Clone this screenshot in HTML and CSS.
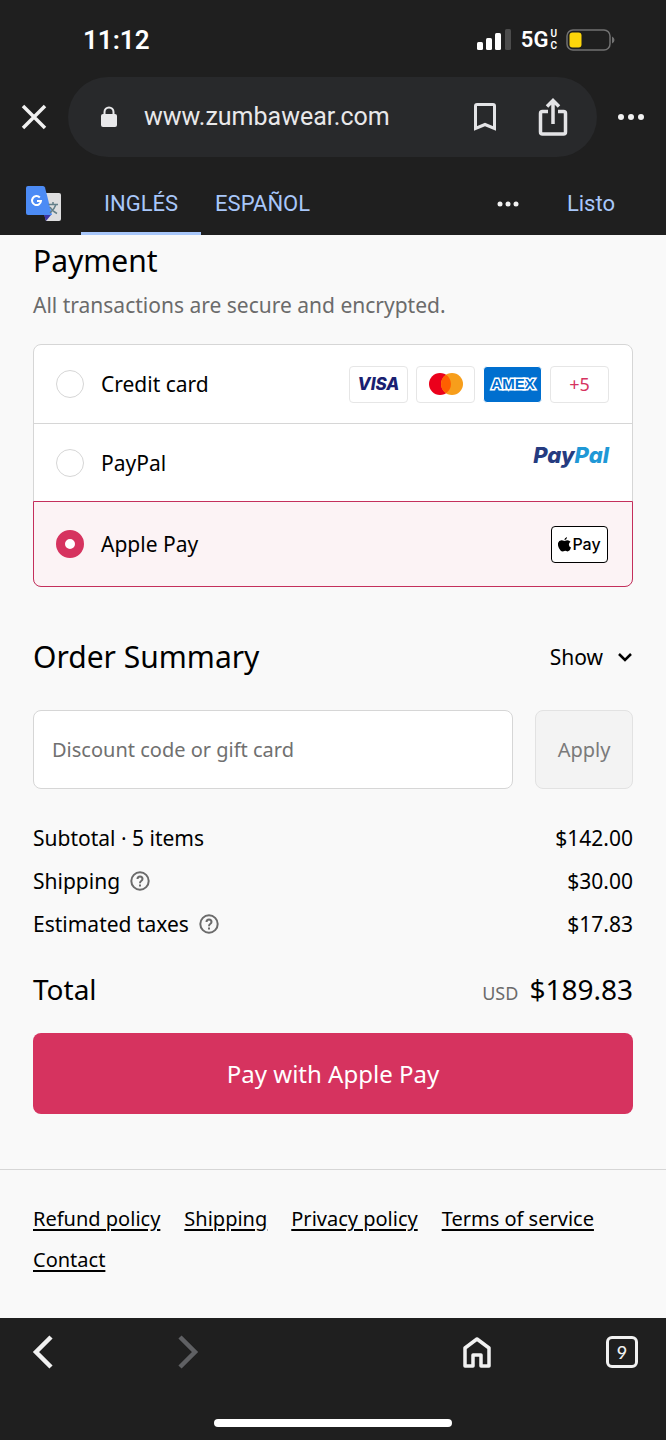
FILE: index.html
```
<!DOCTYPE html>
<html lang="en">
<head>
<meta charset="utf-8">
<meta name="viewport" content="width=device-width, initial-scale=1">
<title>Checkout</title>
<link rel="stylesheet" href="styles.css">
</head>
<body>
<header class="chrome">
  <div class="status">
    <time class="clock">11:12</time>
    <div class="signals">
      <svg width="34" height="22" viewBox="0 0 34 22" fill="#fff" aria-hidden="true"><rect y="13" width="6" height="8" rx="1.5"/><rect x="9" y="9" width="6" height="12" rx="1.5"/><rect x="18" y="4" width="6" height="17" rx="1.5"/><rect x="28" width="6" height="21" rx="1.5" fill="#4c4c4c"/></svg>
      <span class="network">5G</span>
      <span class="network-sub"><span>U</span><span>C</span></span>
      <svg width="50" height="23" viewBox="0 0 50 23" aria-hidden="true"><rect x="1" y="1" width="43" height="20" rx="6" fill="none" stroke="#727272" stroke-width="1.5"/><rect x="3.500" y="3.500" width="12" height="15" rx="3" fill="#fdd60a"/><path d="M46 7.500q2.500 1 2.500 3.500t-2.500 3.500z" fill="#727272"/></svg>
    </div>
  </div>
  <div class="toolbar">
    <button class="icon-button close" type="button" aria-label="Close"><svg width="26" height="26" viewBox="0 0 26 26" fill="none" stroke="#f1f1f1" stroke-width="3.500"><path d="M2 2l22 22M24 2L2 24"/></svg></button>
    <div class="address">
      <svg width="18" height="22" viewBox="0 0 18 22" aria-hidden="true"><rect x="1" y="8" width="16" height="13" rx="2" fill="#e8e8ea"/><path d="M4.500 9V6a4.500 4.500 0 0 1 9 0v3" fill="none" stroke="#e8e8ea" stroke-width="2"/></svg>
      <span class="url">www.zumbawear.com</span>
      <button class="icon-button" type="button" aria-label="Bookmark"><svg width="24" height="30" viewBox="0 0 24 30" fill="none" stroke="#e3e3e6" stroke-width="3"><path d="M2.500 26.500V4q0-1.500 1.500-1.500h16q1.500 0 1.500 1.500v22.500L12 22.500z"/></svg></button>
      <button class="icon-button" type="button" aria-label="Share"><svg width="30" height="38" viewBox="0 0 30 38" fill="none" stroke="#e3e3e6" stroke-width="3.500"><path d="M10 13.500H4.500q-2 0-2 2V34q0 2 2 2h21q2 0 2-2V15.500q0-2-2-2H20M15 26V3M9 8.500l6-6 6 6"/></svg></button>
    </div>
    <button class="icon-button more" type="button" aria-label="More"><svg width="28" height="8" viewBox="0 0 28 8" fill="#f1f1f1"><circle cx="4" cy="4" r="3"/><circle cx="14" cy="4" r="3"/><circle cx="24" cy="4" r="3"/></svg></button>
  </div>
  <div class="translate">
    <svg class="translate-logo" width="36" height="36" viewBox="0 0 36 36" aria-hidden="true">
      <path d="M13 7h20q2 0 2 2v24q0 2-2 2H20z" fill="#dededf"/>
      <path d="M18 29h7l-5 6z" fill="#3c35a8"/>
      <path d="M2 0h15q1.500 0 2 1.500L26 29H2q-2 0-2-2V2q0-2 2-2z" fill="#4c8bf5"/>
      <path d="M22.500 18.500H32M27 16v2.500M30 18.500q-1.500 4.500-6 8.500M24 21q2 4 7 6.500" fill="none" stroke="#637f89" stroke-width="1.500"/>
      <path d="M13.800 11.500a4.500 4.500 0 1 0 1.200 3.500h-4" fill="none" stroke="#fff" stroke-width="2"/>
    </svg>
    <button class="tab active" type="button">INGLÉS</button>
    <button class="tab" type="button">ESPAÑOL</button>
    <button class="icon-button options-more" type="button" aria-label="Options"><svg width="22" height="6" viewBox="0 0 22 6" fill="#f1f1f1"><circle cx="3" cy="3" r="2.500"/><circle cx="11" cy="3" r="2.500"/><circle cx="19" cy="3" r="2.500"/></svg></button>
    <button class="done" type="button">Listo</button>
  </div>
</header>

<main class="page">
  <form class="checkout">
    <h2 class="heading">Payment</h2>
    <p class="note">All transactions are secure and encrypted.</p>
    <div class="methods">
      <div class="method">
        <input class="radio" type="radio" name="method" id="card">
        <label for="card">Credit card</label>
        <div class="brands">
          <span class="brand visa">VISA</span>
          <span class="brand"><svg width="36" height="24" viewBox="0 0 36 24" role="img" aria-label="Mastercard"><circle cx="12" cy="12" r="11" fill="#eb001b"/><circle cx="24" cy="12" r="11" fill="#f79e1b"/><path d="M18 2.800a11 11 0 0 1 0 18.400 11 11 0 0 1 0-18.400z" fill="#ff5f00"/></svg></span>
          <span class="brand amex"><svg width="54" height="24" viewBox="0 0 54 24" role="img" aria-label="American Express"><text class="amex-text" x="27" y="17" text-anchor="middle">AMEX</text></svg></span>
          <button class="brand extra" type="button">+5</button>
        </div>
      </div>
      <div class="method">
        <input class="radio" type="radio" name="method" id="paypal">
        <label for="paypal">PayPal</label>
        <span class="paypal"><span class="paypal-dark">Pay</span>Pal</span>
      </div>
      <div class="method selected">
        <input class="radio" type="radio" name="method" id="apple" checked>
        <label for="apple">Apple Pay</label>
        <span class="apple"><svg width="13" height="15" viewBox="0 0 13 15" aria-hidden="true"><path d="M6.500 4Q8 3.200 9.500 3.200q1.900.1 3 1.600-1.700 1.100-1.600 3 .1 2 2.100 2.800-1.300 3.800-3.500 3.900-1.500-.8-3-.6l-1.900.6Q2.600 14.500 1 11.300-.4 8-.1 6.400.7 3.300 3.500 3.200q1.400 0 3 .8zM6.300 3.300Q6.400.7 9 0q.2 2.700-2.700 3.300z"/></svg>Pay</span>
      </div>
    </div>

    <div class="summary-head">
      <h2 class="heading">Order Summary</h2>
      <button class="show" type="button">Show<svg width="16" height="10" viewBox="0 0 16 10" fill="none" stroke="#000" stroke-width="2.500"><path d="M2 2l6 6 6-6"/></svg></button>
    </div>
    <div class="discount">
      <input class="code" type="text" placeholder="Discount code or gift card" aria-label="Discount code or gift card">
      <button class="apply" type="button" disabled>Apply</button>
    </div>
    <dl class="costs">
      <div class="cost"><dt>Subtotal · 5 items</dt><dd>$142.00</dd></div>
      <div class="cost"><dt>Shipping<svg class="help" viewBox="0 0 20 20" role="img" aria-label="Help"><circle cx="10" cy="10" r="8.700"/><path d="M7.500 8q0-2.500 2.500-2.500T12.500 8q0 1.200-1.300 2-1.200.8-1.200 2.200M10 13.500v2"/></svg></dt><dd>$30.00</dd></div>
      <div class="cost"><dt>Estimated taxes<svg class="help" viewBox="0 0 20 20" role="img" aria-label="Help"><circle cx="10" cy="10" r="8.700"/><path d="M7.500 8q0-2.500 2.500-2.500T12.500 8q0 1.200-1.300 2-1.200.8-1.200 2.200M10 13.500v2"/></svg></dt><dd>$17.83</dd></div>
      <div class="cost total"><dt>Total</dt><dd><span class="currency">USD</span>$189.83</dd></div>
    </dl>
    <button class="pay" type="submit">Pay with Apple Pay</button>
  </form>
  <footer class="policies">
    <a href="#refund">Refund policy</a>
    <a href="#shipping">Shipping</a>
    <a href="#privacy">Privacy policy</a>
    <a href="#terms">Terms of service</a>
    <a href="#contact">Contact</a>
  </footer>
</main>

<nav class="bottom">
  <div class="bottom-row">
    <button class="icon-button" type="button" aria-label="Back"><svg width="22" height="36" viewBox="0 0 22 36" fill="none" stroke="#f1f1f1" stroke-width="4.500"><path d="M19 3L4 18l15 15"/></svg></button>
    <button class="icon-button forward" type="button" aria-label="Forward"><svg width="22" height="36" viewBox="0 0 22 36" fill="none" stroke="#5f6063" stroke-width="4.500"><path d="M2 3l15 15L2 33"/></svg></button>
    <button class="icon-button" type="button" aria-label="Home"><svg width="28" height="32" viewBox="0 0 28 32" fill="none" stroke="#f1f1f1" stroke-width="3.500" stroke-linejoin="round"><path d="M2 12v18h8V19h8v11h8V12L14 3z"/></svg></button>
    <button class="tabs-count" type="button" aria-label="9 open tabs">9</button>
  </div>
  <div class="home-bar"></div>
</nav>
</body>
</html>
```

FILE: styles.css
```
* { box-sizing: border-box; }

body {
  margin: 0;
  min-height: 100vh;
  display: flex;
  flex-direction: column;
  background: #f9f9f9;
  color: #000;
  font: 21px/30px "Noto Sans", sans-serif;
}

button, input { font: inherit; color: inherit; margin: 0; }
button { background: none; border: 0; padding: 0; }
svg { display: block; flex: none; }

.chrome { background: #1f1f1f; color: #fff; }

.status {
  height: 77px;
  padding: 3px 50px 0 83px;
  display: flex;
  align-items: center;
  justify-content: space-between;
  font-family: Roboto, sans-serif;
}
.clock { font-size: 26px; font-weight: 600; }
.signals { display: flex; align-items: center; }
.network { margin-left: 10px; font-size: 22px; font-weight: 600; }
.network-sub {
  margin: 0 9px 0 2px;
  display: flex;
  flex-direction: column;
  font-size: 10px;
  line-height: 12px;
  font-weight: 600;
}

.icon-button { display: flex; align-items: center; justify-content: center; }

.toolbar { display: flex; align-items: center; padding: 0 21px; }
.close { margin-right: 21px; }
.address {
  flex: 1;
  height: 80px;
  padding: 0 29px 0 32px;
  border-radius: 40px;
  background: #28292b;
  display: flex;
  align-items: center;
}
.url { flex: 1; margin-left: 26px; font: 25px/32px Roboto, sans-serif; color: #e8e8ea; }
.address .icon-button + .icon-button { margin-left: 41px; }
.more { margin-left: 20px; }

.translate {
  height: 78px;
  padding: 16px 51px 0 26px;
  display: flex;
  align-items: stretch;
  font-family: Roboto, sans-serif;
  font-size: 22px;
  color: #a8c7fa;
}
.translate-logo { align-self: center; margin-right: 19px; }
.tab { padding: 2px 23px 0; border-bottom: 3px solid transparent; }
.tab + .tab { padding: 2px 14px 0; }
.active { border-color: #a8c7fa; border-radius: 3px 3px 0 0; }
.options-more { margin: 0 48px 0 auto; }

.page { flex: 1; }
.checkout { padding: 6px 33px 55px; }
.heading { margin: 0; font-size: 30px; line-height: 40px; font-weight: 400; }
.note { margin: 9px 0 24px; color: #6b6b6b; }

.methods { border: 1px solid #d6d6d6; border-radius: 8px; background: #fff; }
.method {
  min-height: 78px;
  padding: 0 23px 0 22px;
  display: flex;
  align-items: center;
}
.method + .method { border-top: 1px solid #d6d6d6; }
.method label { flex: 1; margin-left: 17px; }
.method.selected {
  min-height: 86px;
  margin: 0 -1px -1px;
  padding: 0 24px 0 22px;
  border: 1px solid #c42f5c;
  border-radius: 0 0 8px 8px;
  background: #fcf3f5;
}
.radio {
  appearance: none;
  width: 28px;
  height: 28px;
  border: 1px solid #d6d6d6;
  border-radius: 50%;
  background: #fff;
}
.radio:checked { border: 9px solid #d6335f; }

.brands { display: flex; gap: 8px; }
.brand {
  width: 59px;
  height: 37px;
  border: 1px solid #e6e6e6;
  border-radius: 4px;
  background: #fff;
  display: flex;
  align-items: center;
  justify-content: center;
}
.visa { font: italic 800 17px/20px Inter, sans-serif; color: #1a1f71; }
.amex { border-color: #fff; background: #006fcf; }
.amex-text {
  font: 700 15px "Liberation Sans", sans-serif;
  fill: #006fcf;
  stroke: #fff;
  stroke-width: 3px;
  paint-order: stroke;
}
.extra { font-size: 18px; color: #d6335f; }
.paypal {
  padding-bottom: 16px;
  font: italic 800 22px/26px Inter, sans-serif;
  color: #1f98d6;
}
.paypal-dark { color: #253b80; }
.apple {
  width: 57px;
  height: 37px;
  border: 1px solid #000;
  border-radius: 4px;
  background: #fff;
  display: flex;
  align-items: center;
  justify-content: center;
  gap: 1px;
  font: 500 16px/20px Inter, sans-serif;
}

.summary-head {
  margin: 50px 0 33px;
  display: flex;
  align-items: center;
  justify-content: space-between;
}
.show { display: flex; align-items: center; gap: 14px; }

.discount { display: flex; gap: 22px; font-size: 20px; }
.code {
  flex: 1;
  min-width: 0;
  height: 79px;
  padding: 0 18px;
  border: 1px solid #d6d6d6;
  border-radius: 8px;
  background: #fff;
}
.code::placeholder { color: #707070; opacity: 1; }
.apply {
  width: 98px;
  border: 1px solid #e2e2e2;
  border-radius: 8px;
  background: #f3f3f3;
  color: #7a7a7a;
}

.costs { margin: 34px 0 24px; display: grid; gap: 13px; }
.cost { display: flex; justify-content: space-between; }
.cost dt, .cost dd { margin: 0; display: flex; align-items: center; }
.help {
  width: 20px;
  height: 20px;
  margin-left: 10px;
  fill: none;
  stroke: #6b6b6b;
  stroke-width: 2px;
}
.total { margin-top: 17px; line-height: 40px; font-size: 28px; }
.cost.total dd { align-items: baseline; }
.currency { margin-right: 11px; font-size: 18px; line-height: 20px; color: #6b6b6b; }
.pay {
  width: 100%;
  height: 81px;
  border-radius: 8px;
  background: #d6335f;
  color: #fff;
  font-size: 24px;
}

.policies {
  padding: 34px 33px 43px;
  border-top: 1px solid #d6d6d6;
  display: flex;
  flex-wrap: wrap;
  gap: 11px 24px;
  font-size: 20px;
}
.policies a { color: #000; text-underline-offset: 3px; }

.bottom { background: #1f1f1f; padding: 16px 28px 13px; }
.bottom-row { display: flex; align-items: center; }
.bottom-row > :first-child { padding-left: 4px; }
.forward { margin: 0 auto 0 124px; }
.tabs-count {
  width: 32px;
  height: 32px;
  margin-left: 115px;
  border: 3px solid #f1f1f1;
  border-radius: 6px;
  color: #f1f1f1;
  font: 500 18px/24px Lato, sans-serif;
}
.home-bar {
  width: 39%;
  height: 8px;
  margin: 49px auto 0;
  border-radius: 4px;
  background: #fff;
}
```
